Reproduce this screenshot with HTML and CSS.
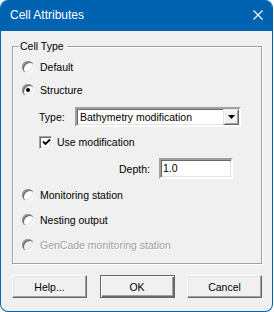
FILE: index.html
```html
<!DOCTYPE html>
<html lang="en">
<head>
    <meta charset="UTF-8">
    <title>Cell Attributes</title>
    <link rel="stylesheet" href="styles.css">
</head>
<body>
    <div class="window">
        <div class="titlebar">
            <span class="title">Cell Attributes</span>
            <svg class="close" width="10" height="10" viewBox="0 0 10 10">
                <path d="M0.5 0.5 L9.5 9.5 M9.5 0.5 L0.5 9.5" stroke="#fff" stroke-width="1.1" fill="none"/>
            </svg>
        </div>
        <div class="content">
            <div class="group">
                <span class="group-title">Cell Type</span>
                <div class="opt row-default"><span class="radio"></span><span>Default</span></div>
                <div class="opt row-structure"><span class="radio checked"></span><span>Structure</span></div>
                <div class="type-row">
                    <span class="type-label">Type:</span>
                    <div class="combo">
                        <span class="combo-text">Bathymetry modification</span>
                        <span class="combo-btn">
                            <svg width="7" height="4" viewBox="0 0 7 4"><path d="M0 0 H7 L3.5 4 Z" fill="#000"/></svg>
                        </span>
                    </div>
                </div>
                <div class="check-row">
                    <span class="check">
                        <svg width="9" height="9" viewBox="0 0 9 9"><path d="M1 3.5 L3.5 6 L8 1.5" stroke="#000" stroke-width="1.8" fill="none"/></svg>
                    </span>
                    <span>Use modification</span>
                </div>
                <div class="depth-row">
                    <span class="depth-label">Depth:</span>
                    <div class="edit">1.0</div>
                </div>
                <div class="opt row-monitor"><span class="radio"></span><span>Monitoring station</span></div>
                <div class="opt row-nest"><span class="radio"></span><span>Nesting output</span></div>
                <div class="opt row-gencade disabled"><span class="radio"></span><span>GenCade monitoring station</span></div>
            </div>
            <div class="buttons">
                <button class="btn">Help...</button>
                <button class="btn default">OK</button>
                <button class="btn">Cancel</button>
            </div>
        </div>
    </div>
</body>
</html>
```

FILE: styles.css
```css
body {
    margin: 0;
    background-color: #ffffff;
    font-family: "Liberation Sans", Arial, sans-serif;
}
.window {
    width: 273px;
    height: 312px;
    box-sizing: border-box;
    border: 1px solid #0063b1;
    border-top: none;
    border-radius: 8px;
    overflow: hidden;
    background-color: #f0f0f0;
}
.titlebar {
    height: 31px;
    background-color: #0063b1;
    display: flex;
    align-items: center;
    justify-content: space-between;
    padding: 0 9px;
    color: #ffffff;
    font-size: 12px;
}
.title {
    margin-top: -1px;
}
.close {
    margin-top: -1px;
}
.content {
    padding: 15px 10px 0 11px;
    font-size: 10.5px;
    color: #000000;
}
.group {
    border: 1px solid #a0a0a0;
    box-shadow: inset 1px 1px 0 #ffffff, 1px 1px 0 #ffffff;
    padding-bottom: 10px;
}
.group-title {
    display: block;
    width: fit-content;
    margin: -7px 0 0 6px;
    padding: 0 3px 0 1px;
    line-height: 13px;
    background-color: #f0f0f0;
}
.opt {
    display: flex;
    align-items: center;
    height: 16px;
    margin-left: 9px;
}
.radio {
    width: 12px;
    height: 12px;
    border-radius: 50%;
    background-color: #ffffff;
    box-shadow: inset 1px 1px 0 #a0a0a0, inset 2px 2px 0 #696969, inset -1px -1px 0 #ffffff, inset -2px -2px 0 #e3e3e3;
    margin-right: 6px;
    display: flex;
    align-items: center;
    justify-content: center;
}
.radio.checked::after {
    content: "";
    width: 4px;
    height: 4px;
    border-radius: 50%;
    background-color: #000000;
}
.disabled {
    color: #a0a0a0;
    text-shadow: 1px 1px 0 #ffffff;
}
.disabled .radio {
    background-color: #f0f0f0;
}
.row-default { margin-top: 6px; }
.row-structure { margin-top: 7px; }
.row-monitor { margin-top: 8px; }
.row-nest { margin-top: 9px; }
.row-gencade { margin-top: 9px; }

.type-row {
    display: flex;
    align-items: center;
    margin: 9px 0 0 26px;
    height: 20px;
}
.type-label {
    width: 36px;
}
.combo {
    width: 166px;
    height: 20px;
    box-sizing: border-box;
    border: 2px solid;
    border-color: #a0a0a0 #ffffff #ffffff #a0a0a0;
    box-shadow: inset 1px 1px 0 #696969, inset -1px -1px 0 #e3e3e3;
    background-color: #ffffff;
    display: flex;
    align-items: center;
}
.combo-text {
    flex: 1;
    padding-left: 3px;
}
.combo-btn {
    width: 16px;
    height: 16px;
    box-sizing: border-box;
    background-color: #f0f0f0;
    border: 1px solid;
    border-color: #e3e3e3 #696969 #696969 #e3e3e3;
    box-shadow: inset 1px 1px 0 #ffffff, inset -1px -1px 0 #a0a0a0;
    display: flex;
    align-items: center;
    justify-content: center;
}
.check-row {
    display: flex;
    align-items: center;
    height: 16px;
    margin: 7px 0 0 26px;
}
.check {
    width: 13px;
    height: 13px;
    box-sizing: border-box;
    border: 1px solid;
    border-color: #a0a0a0 #ffffff #ffffff #a0a0a0;
    box-shadow: inset 1px 1px 0 #696969, inset -1px -1px 0 #e3e3e3;
    background-color: #ffffff;
    display: flex;
    align-items: center;
    justify-content: center;
    padding: 1px 0 0 1px;
    margin-right: 5px;
}
.depth-row {
    display: flex;
    align-items: center;
    height: 21px;
    margin: 8px 0 0 106px;
}
.depth-label {
    width: 40px;
}
.edit {
    width: 74px;
    height: 21px;
    box-sizing: border-box;
    border: 2px solid;
    border-color: #a0a0a0 #ffffff #ffffff #a0a0a0;
    box-shadow: inset 1px 1px 0 #696969, inset -1px -1px 0 #e3e3e3;
    background-color: #ffffff;
    padding-left: 2px;
    line-height: 17px;
}
.buttons {
    display: flex;
    justify-content: space-between;
    margin-top: 11px;
}
.btn {
    width: 75px;
    height: 23px;
    box-sizing: border-box;
    font-family: "Liberation Sans", Arial, sans-serif;
    font-size: 10.5px;
    color: #000000;
    background-color: #f0f0f0;
    border: 1px solid;
    border-color: #ffffff #696969 #696969 #ffffff;
    box-shadow: inset -1px -1px 0 #a0a0a0, inset 1px 1px 0 #e3e3e3;
    padding: 0;
}
.btn.default {
    border-color: #646464;
    box-shadow: inset 1px 1px 0 #ffffff, inset -1px -1px 0 #696969, inset -2px -2px 0 #a0a0a0;
}
```
